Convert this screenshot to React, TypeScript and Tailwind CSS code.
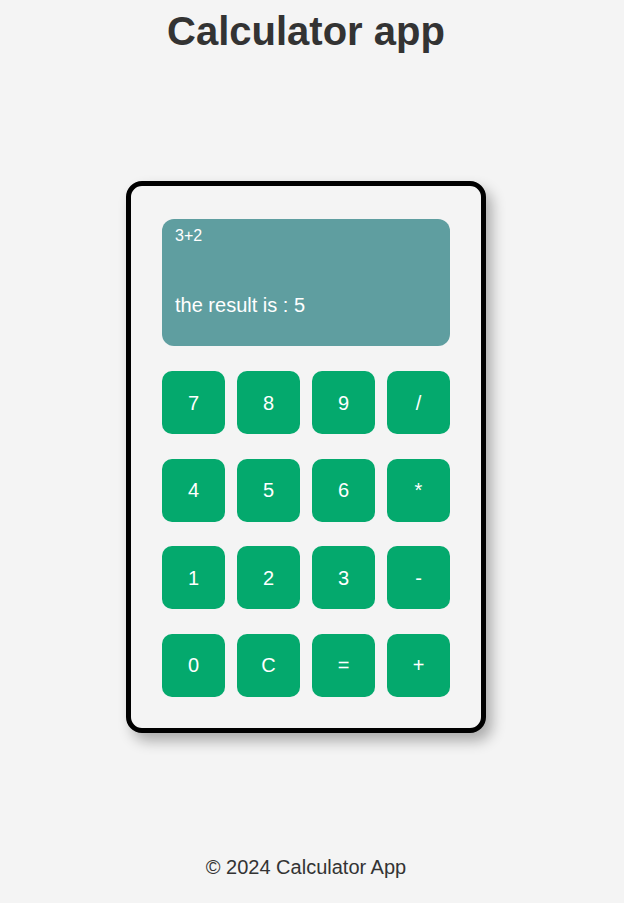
const keys = ["7", "8", "9", "/", "4", "5", "6", "*", "1", "2", "3", "-", "0", "C", "=", "+"]

function App() {
  return (
    <div
      className="flex min-h-[903px] flex-col items-center bg-[#f4f4f4] pr-[12px] text-[#333]"
      style={{ fontFamily: '"Liberation Sans", Arial, sans-serif' }}
    >
      <h1 className="mt-[8px] text-[40px] font-bold leading-[46px]">Calculator app</h1>

      <div className="mt-[127px] w-[360px] rounded-[16px] border-[5px] border-black bg-[#f4f4f4] px-[31px] pt-[33px] pb-[31px] shadow-[6px_8px_14px_rgba(0,0,0,0.3)]">
        <div className="h-[127px] rounded-[12px] bg-[#5f9ea0] pl-[13px] pt-[8px] text-white">
          <div className="text-[16px] leading-[18px]">3+2</div>
          <div className="mt-[49px] text-[20px] leading-[23px]">the result is : 5</div>
        </div>

        <div className="mt-[25px] grid grid-cols-4 gap-x-[12px] gap-y-[24.67px]">
          {keys.map((k) => (
            <button
              key={k}
              className="flex h-[63px] items-center justify-center rounded-[10px] bg-[#04a96d] text-[20px] text-white"
            >
              {k}
            </button>
          ))}
        </div>
      </div>

      <footer className="mt-[123px] text-[20px] leading-[23px]">© 2024 Calculator App</footer>
    </div>
  )
}

export default App
